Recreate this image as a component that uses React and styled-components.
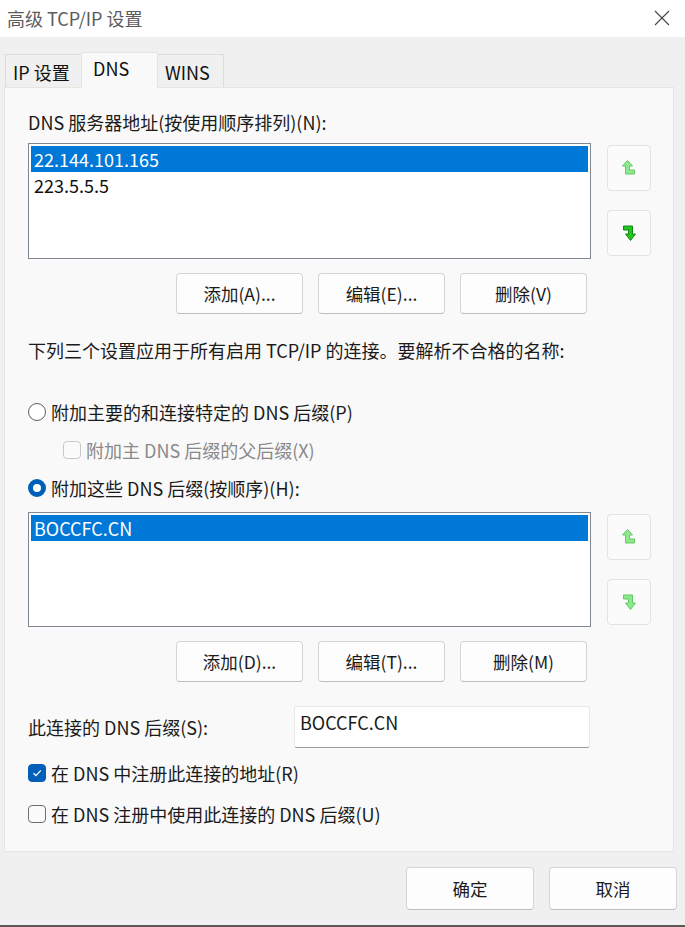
import React from "react";
import styled, { createGlobalStyle } from "styled-components";

const GlobalStyle = createGlobalStyle`
  html, body {
    margin: 0;
    padding: 0;
    background: #f0f0f0;
  }
  body {
    font-family: "Noto Sans CJK SC", "Noto Sans", sans-serif;
    font-size: 18px;
    color: #1b1b1b;
  }
`;

const ArrowUp = ({ enabled }) => (
  <svg width="14" height="18" viewBox="0 0 14 18">
    <polygon
      points="5.5,1.5 10.5,7 7.5,7 7.5,11 12.5,11 12.5,15 3.5,15 3.5,7 0.5,7"
      fill={enabled ? "#1fc41f" : "#8ee88e"}
      stroke={enabled ? "#138a13" : "#63c963"}
      strokeWidth="1"
      strokeLinejoin="round"
    />
  </svg>
);

const ArrowDown = ({ enabled }) => (
  <svg width="14" height="18" viewBox="0 0 14 18">
    <polygon
      points="1.5,2 10.5,2 10.5,10 13.5,10 8.5,16.5 3.5,10 6.5,10 6.5,6 1.5,6"
      fill={enabled ? "#1fc41f" : "#8ee88e"}
      stroke={enabled ? "#138a13" : "#63c963"}
      strokeWidth="1"
      strokeLinejoin="round"
    />
  </svg>
);

const CloseIcon = () => (
  <svg width="16" height="16" viewBox="0 0 16 16">
    <path d="M1 1 L15 15 M15 1 L1 15" stroke="#444" strokeWidth="1.1" fill="none" />
  </svg>
);

const CheckMark = () => (
  <svg width="12" height="12" viewBox="0 0 12 12">
    <path d="M2.5 6.2 L5 8.6 L9.8 3.4" stroke="#fff" strokeWidth="1.3" fill="none" />
  </svg>
);

const ListBlock = ({ items, upEnabled, downEnabled, top, height }) => (
  <ListRow top={top}>
    <ListBox h={height}>
      {items.map((item, i) => (
        <ListItem key={item} selected={i === 0}>
          {item}
        </ListItem>
      ))}
    </ListBox>
    <SideButtons>
      <ArrowButton>
        <ArrowUp enabled={upEnabled} />
      </ArrowButton>
      <ArrowButton>
        <ArrowDown enabled={downEnabled} />
      </ArrowButton>
    </SideButtons>
  </ListRow>
);

const App = () => {
  return (
    <Window>
      <GlobalStyle />
      <TitleBar>
        <Title>高级 TCP/IP 设置</Title>
        <CloseIcon />
      </TitleBar>
      <Body>
        <TabStrip>
          <Tab w={77}>IP 设置</Tab>
          <Tab w={77} active>DNS</Tab>
          <Tab w={67}>WINS</Tab>
        </TabStrip>
        <Panel>
          <Label>DNS 服务器地址(按使用顺序排列)(N):</Label>
          <ListBlock items={["22.144.101.165", "223.5.5.5"]} downEnabled top={9} height={116} />
          <ButtonRow>
            <Button>添加(A)...</Button>
            <Button>编辑(E)...</Button>
            <Button>删除(V)</Button>
          </ButtonRow>
          <Info>下列三个设置应用于所有启用 TCP/IP 的连接。要解析不合格的名称:</Info>
          <Option top={38}>
            <Radio />
            附加主要的和连接特定的 DNS 后缀(P)
          </Option>
          <Option indent={35} disabled>
            <Check disabled />
            附加主 DNS 后缀的父后缀(X)
          </Option>
          <Option>
            <Radio checked />
            附加这些 DNS 后缀(按顺序)(H):
          </Option>
          <ListBlock items={["BOCCFC.CN"]} top={12} height={115} />
          <ButtonRow>
            <Button>添加(D)...</Button>
            <Button>编辑(T)...</Button>
            <Button>删除(M)</Button>
          </ButtonRow>
          <SuffixRow>
            <SuffixLabel>此连接的 DNS 后缀(S):</SuffixLabel>
            <TextField>BOCCFC.CN</TextField>
          </SuffixRow>
          <Option top={13}>
            <Check checked>
              <CheckMark />
            </Check>
            在 DNS 中注册此连接的地址(R)
          </Option>
          <Option top={17}>
            <Check />
            在 DNS 注册中使用此连接的 DNS 后缀(U)
          </Option>
        </Panel>
      </Body>
      <Footer>
        <Button wide>确定</Button>
        <Button wide>取消</Button>
      </Footer>
      <BottomEdge />
    </Window>
  );
};

const Window = styled.div`
  width: 685px;
  height: 927px;
  display: flex;
  flex-direction: column;
  background: #f0f0f0;
  overflow: hidden;
`;

const TitleBar = styled.div`
  height: 37px;
  background: #ffffff;
  display: flex;
  align-items: center;
  justify-content: space-between;
  padding: 0 15px 2px 7px;
  box-sizing: border-box;
`;

const Title = styled.div`
  font-size: 18px;
  color: #5c5c5c;
`;

const Body = styled.div`
  padding: 14px 11px 0 4px;
`;

const TabStrip = styled.div`
  display: flex;
  align-items: flex-end;
  padding-left: 1px;
  height: 36px;
`;

const Tab = styled.div`
  width: ${(p) => p.w}px;
  height: ${(p) => (p.active ? 36 : 33)}px;
  display: flex;
  justify-content: flex-start;
  align-items: ${(p) => (p.active ? "flex-start" : "center")};
  padding-top: ${(p) => (p.active ? 2 : 1)}px;
  padding-left: ${(p) => (p.active ? 11 : 7)}px;
  box-sizing: border-box;
  font-size: 18px;
  color: #111;
  background: ${(p) => (p.active ? "#f9f9f9" : "#f0f0f0")};
  border: 1px solid ${(p) => (p.active ? "#e5e5e5" : "#dcdcdc")};
  border-bottom: none;
  margin-bottom: ${(p) => (p.active ? -1 : 0)}px;
  position: relative;
  z-index: ${(p) => (p.active ? 1 : 0)};
  margin-left: ${(p) => (p.active ? -1 : 0)}px;
  margin-right: ${(p) => (p.active ? -1 : 0)}px;
`;

const Panel = styled.div`
  height: 765px;
  box-sizing: border-box;
  background: #f9f9f9;
  border: 1px solid #e5e5e5;
  padding: 22px 0 0 23px;
  display: flex;
  flex-direction: column;
`;

const Label = styled.div`
  line-height: 24px;
`;

const ListRow = styled.div`
  display: flex;
  align-items: flex-start;
  gap: 16px;
  margin-top: ${(p) => p.top}px;
`;

const ListBox = styled.div`
  width: 563px;
  height: ${(p) => p.h}px;
  box-sizing: border-box;
  background: #ffffff;
  border: 1px solid #7f8790;
  padding: 2px;
`;

const ListItem = styled.div`
  height: 26px;
  line-height: 26px;
  padding-left: 3px;
  font-size: 18px;
  background: ${(p) => (p.selected ? "#0078d7" : "transparent")};
  color: ${(p) => (p.selected ? "#ffffff" : "#111")};
`;

const SideButtons = styled.div`
  display: flex;
  flex-direction: column;
  gap: 19px;
  padding-top: 2px;
`;

const ArrowButton = styled.div`
  width: 44px;
  height: 46px;
  box-sizing: border-box;
  border: 1px solid #e3e3e3;
  border-radius: 4px;
  background: #fbfbfb;
  display: flex;
  align-items: center;
  justify-content: center;
`;

const ButtonRow = styled.div`
  display: flex;
  gap: 15px;
  margin-top: 14px;
  padding-left: 148px;
`;

const Button = styled.div`
  width: ${(p) => (p.wide ? 128 : 127)}px;
  height: ${(p) => (p.wide ? 43 : 41)}px;
  box-sizing: border-box;
  background: #fdfdfd;
  border: 1px solid #d5d5d5;
  border-bottom-color: #bdbdbd;
  border-radius: 4px;
  display: flex;
  align-items: center;
  justify-content: center;
  font-size: 17.5px;
  color: #1b1b1b;
`;

const Info = styled.div`
  margin-top: 24px;
  line-height: 24px;
`;

const Option = styled.div`
  display: flex;
  align-items: center;
  gap: 5px;
  margin-top: ${(p) => (p.top !== undefined ? p.top : 14)}px;
  padding-left: ${(p) => p.indent || 0}px;
  line-height: 24px;
  color: ${(p) => (p.disabled ? "#8a8a8a" : "#1b1b1b")};
`;

const Radio = styled.span`
  width: 18px;
  height: 18px;
  box-sizing: border-box;
  border-radius: 50%;
  background: #ffffff;
  border: ${(p) => (p.checked ? "5px solid #005fb8" : "1px solid #5f5f5f")};
  flex: none;
`;

const Check = styled.span`
  width: 18px;
  height: 18px;
  box-sizing: border-box;
  border-radius: 4px;
  flex: none;
  display: flex;
  align-items: center;
  justify-content: center;
  background: ${(p) => (p.checked ? "#005fb8" : "#fbfbfb")};
  border: 1px solid
    ${(p) => (p.checked ? "#005fb8" : p.disabled ? "#c8c8c8" : "#6e6e6e")};
`;

const SuffixRow = styled.div`
  display: flex;
  align-items: center;
  margin-top: 24px;
`;

const SuffixLabel = styled.div`
  width: 266px;
  line-height: 24px;
`;

const TextField = styled.div`
  width: 296px;
  height: 42px;
  box-sizing: border-box;
  background: #ffffff;
  border: 1px solid #e8e8e8;
  border-bottom: 1px solid #9a9a9a;
  border-radius: 3px;
  padding: 3px 5px;
  font-size: 18px;
  line-height: 24px;
`;

const Footer = styled.div`
  flex: 1;
  display: flex;
  justify-content: flex-end;
  align-items: flex-start;
  gap: 15px;
  padding: 15px 8px 0 0;
`;

const BottomEdge = styled.div`
  height: 2px;
  background: #5a5a5a;
`;

export default App;
